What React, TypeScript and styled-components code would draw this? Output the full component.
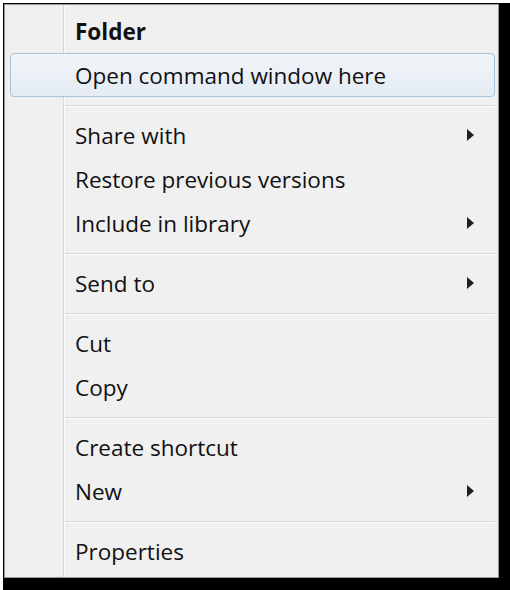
import React from "react";
import styled, { createGlobalStyle } from "styled-components";

type item = {
    label: string,
    bold?: boolean,
    hot?: boolean,
    sub?: boolean,
}

const groups: item[][] = [
    [
        { label: "Folder", bold: true },
        { label: "Open command window here", hot: true },
    ],
    [
        { label: "Share with", sub: true },
        { label: "Restore previous versions" },
        { label: "Include in library", sub: true },
    ],
    [{ label: "Send to", sub: true }],
    [{ label: "Cut" }, { label: "Copy" }],
    [{ label: "Create shortcut" }, { label: "New", sub: true }],
    [{ label: "Properties" }],
];

const GlobalStyle = createGlobalStyle`
  html, body {
    margin: 0;
    background: #fff;
  }
  body {
    font-family: "Open Sans", "Noto Sans", sans-serif;
  }
`;

const Canvas = styled.div`
  width: 510px;
  height: 590px;
  padding: 3px 0 0 3px;
  box-sizing: border-box;
  overflow: hidden;
`;

const Shadow = styled.div`
  width: 507px;
  height: 587px;
  background: #000;
  padding: 1px 0 0 1px;
  box-sizing: border-box;
`;

const Menu = styled.div`
  width: 495px;
  height: 574px;
  box-sizing: border-box;
  border: 1px solid #979797;
  padding: 4px 3px 3px 5px;
  background: linear-gradient(
    to right,
    #f0f0f0 58px,
    #d6d6d6 58px,
    #d6d6d6 59px,
    #fcfcfc 59px,
    #fcfcfc 60px,
    #f0f0f0 60px
  );
  display: flex;
  flex-direction: column;
`;

const Row = styled.div<{ $hot?: boolean }>`
  height: 44px;
  box-sizing: border-box;
  display: flex;
  align-items: center;
  padding: 0 20px 0 64px;
  border: 1px solid ${p => (p.$hot ? "#aac3dc" : "transparent")};
  border-radius: 4px;
  background: ${p => (p.$hot ? "linear-gradient(#f1f5f9, #e4ebf3)" : "transparent")};
`;

const Label = styled.span<{ $bold?: boolean }>`
  flex: 1;
  font-size: 22.5px;
  font-weight: ${p => (p.$bold ? 700 : 400)};
  color: #111;
  white-space: nowrap;
`;

const Arrow = styled.span`
  width: 0;
  height: 0;
  border-top: 6.5px solid transparent;
  border-bottom: 6.5px solid transparent;
  border-left: 7px solid #202020;
`;

const Separator = styled.div`
  height: 16px;
  box-sizing: border-box;
  padding-top: 8px;
  margin-left: 55px;
  &::before {
    content: "";
    display: block;
    height: 1px;
    background: #d6d6d6;
    border-bottom: 1px solid #fcfcfc;
  }
`;

export default function App() {
    return (
        <>
            <GlobalStyle />
            <Canvas>
                <Shadow>
                    <Menu>
                        {groups.map((g, i) => (
                            <React.Fragment key={i}>
                                {i > 0 && <Separator />}
                                {g.map(it => (
                                    <Row key={it.label} $hot={it.hot}>
                                        <Label $bold={it.bold}>{it.label}</Label>
                                        {it.sub && <Arrow />}
                                    </Row>
                                ))}
                            </React.Fragment>
                        ))}
                    </Menu>
                </Shadow>
            </Canvas>
        </>
    );
}
